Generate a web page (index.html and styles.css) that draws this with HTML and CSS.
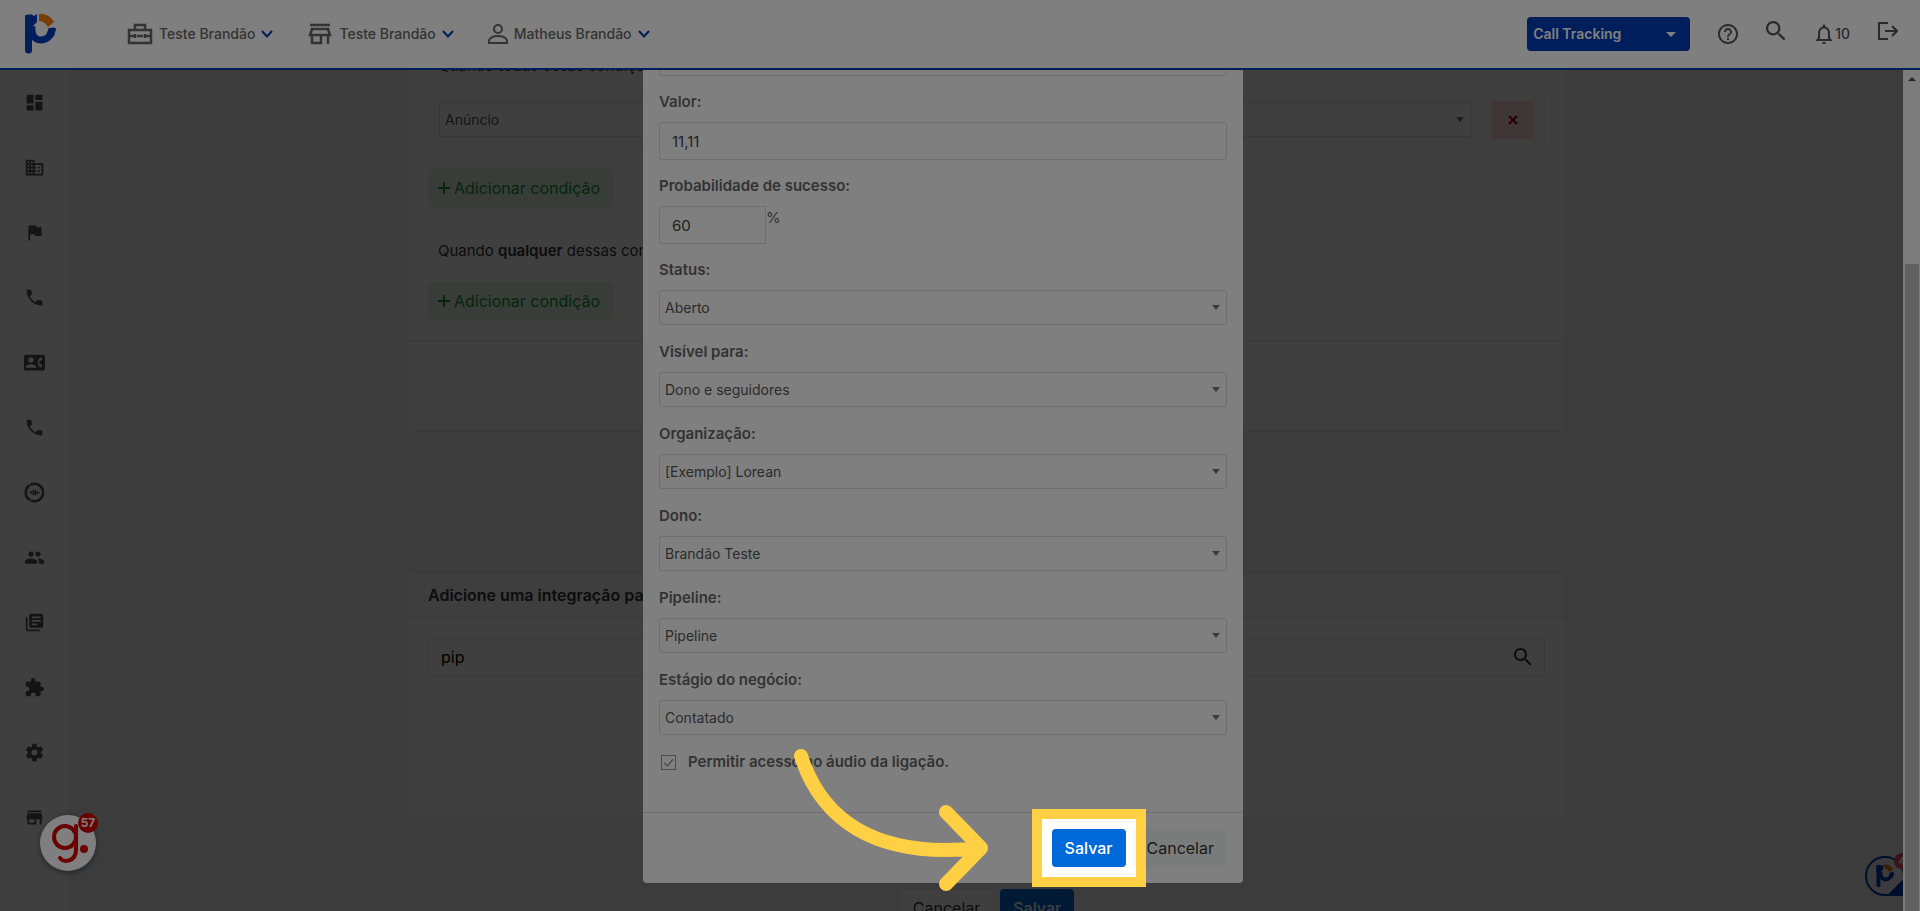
FILE: index.html
```html
<!DOCTYPE html>
<html lang="pt-BR">
<head>
  <meta charset="UTF-8" />
  <meta name="viewport" content="width=device-width, initial-scale=1.0"/>
  <title>Call Tracking</title>
  <link rel="stylesheet" href="styles.css">
</head>
<body>
  <svg class="defs" aria-hidden="true">
    <symbol id="brand" viewBox="0 0 32 42">
      <path d="M4.500 5v32" fill="none" stroke="#003ab8" stroke-width="7" stroke-linecap="round"/>
      <path d="M1 2l3 1.500L7 1l3 2 3-2v8L8 14H1z" fill="#003ab8"/>
      <path d="M8 13c-1 6 1 14 9 14 6 0 11-5 11-12" fill="none" stroke="#003ab8" stroke-width="7"/>
      <path d="M29 14l-6 5v8l7-4 2-7z" fill="#003ab8"/>
      <path d="M15 1c7-1 12 3 15 8l-6 5c-2-3-5-6-9-6z" fill="#ef7d0f"/>
    </symbol>
    <symbol id="phone" viewBox="0 0 24 24"><path d="M6.620 10.790c1.440 2.830 3.760 5.140 6.590 6.590l2.200-2.200c.27-.27.67-.36 1.020-.24 1.120.37 2.330.57 3.570.57.55 0 1 .45 1 1V20c0 .55-.45 1-1 1-9.390 0-17-7.610-17-17 0-.55.45-1 1-1h3.500c.55 0 1 .45 1 1 0 1.250.2 2.450.57 3.570.11.35.03.74-.25 1.020l-2.200 2.200z"/></symbol>
    <symbol id="store" viewBox="0 0 24 24"><path d="M20 4H4v2h16V4zm1 10v-2l-1-5H4l-1 5v2h1v6h10v-6h4v6h2v-6h1zm-9 4H6v-4h6v4z"/></symbol>
    <symbol id="search" viewBox="3 3 18 18"><path d="M15.500 14h-.79l-.28-.27C15.410 12.590 16 11.110 16 9.500 16 5.910 13.090 3 9.500 3S3 5.910 3 9.500 5.910 16 9.500 16c1.610 0 3.090-.59 4.230-1.570l.27.28v.79l5 4.990L20.490 19l-4.990-5zm-6 0C7.010 14 5 11.990 5 9.500S7.010 5 9.500 5 14 7.010 14 9.500 11.990 14 9.500 14z"/></symbol>
    <symbol id="chevron" viewBox="0 0 12 8"><path d="M1 1l5 5.500L11 1" fill="none" stroke="#003ab8" stroke-width="2"/></symbol>
    <symbol id="plus" viewBox="0 0 12 12"><path d="M6 0v12M0 6h12" fill="none" stroke="currentColor" stroke-width="2"/></symbol>
  </svg>

  <header class="topbar">
    <a class="logo" href="#" aria-label="Início"><svg><use href="#brand"/></svg></a>

    <nav class="accounts">
      <button class="account">
        <svg class="account-icon" viewBox="0 0 26 22" fill="none" stroke="currentColor" stroke-width="2.500">
          <path d="M2 7h22v13H2zM8 6V2h10v4M2 13h5m3 0h6m3 0h5M8 11v4m10-4v4"/>
        </svg>
        Teste Brandão
        <svg class="chevron"><use href="#chevron"/></svg>
      </button>
      <button class="account">
        <svg class="account-icon" viewBox="0 0 24 22" fill="none" stroke="currentColor" stroke-width="2.500">
          <path d="M2 2h20M4 6h16l2 6H2zM4 12v8h9v-8M20 12v9"/>
        </svg>
        Teste Brandão
        <svg class="chevron"><use href="#chevron"/></svg>
      </button>
      <button class="account">
        <svg class="account-icon user" viewBox="0 0 20 22" fill="none" stroke="currentColor" stroke-width="2">
          <circle cx="10" cy="6" r="4"/><path d="M1 20v-2c0-3 4-5 9-5s9 2 9 5v2z"/>
        </svg>
        Matheus Brandão
        <svg class="chevron"><use href="#chevron"/></svg>
      </button>
    </nav>

    <div class="tools">
      <div class="product">
        <select aria-label="Produto"><option>Call Tracking</option></select>
      </div>
      <a href="#" class="tool" aria-label="Ajuda">
        <svg viewBox="2 2 20 20"><path d="M11 18h2v-2h-2v2zm1-16C6.480 2 2 6.480 2 12s4.480 10 10 10 10-4.480 10-10S17.520 2 12 2zm0 18c-4.410 0-8-3.590-8-8s3.590-8 8-8 8 3.590 8 8-3.590 8-8 8zm0-14c-2.210 0-4 1.790-4 4h2c0-1.100.9-2 2-2s2 .9 2 2c0 2-3 1.750-3 5h2c0-2.250 3-2.500 3-5 0-2.210-1.790-4-4-4z"/></svg>
      </a>
      <a href="#" class="tool raised" aria-label="Buscar"><svg><use href="#search"/></svg></a>
      <a href="#" class="tool alerts" aria-label="Notificações">
        <svg viewBox="2 2 20 20"><path d="M12 22c1.100 0 2-.9 2-2h-4c0 1.100.89 2 2 2zm6-6v-5c0-3.070-1.640-5.640-4.500-6.320V4c0-.83-.67-1.500-1.500-1.500s-1.500.67-1.500 1.500v.68C7.630 5.360 6 7.920 6 11v5l-2 2v1h16v-1l-2-2zm-2 1H8v-6c0-2.480 1.510-4.500 4-4.500s4 2.020 4 4.500v6z"/></svg>
        <span>10</span>
      </a>
      <a href="#" class="tool raised" aria-label="Sair">
        <svg viewBox="0 0 20 20" fill="none" stroke="currentColor" stroke-width="2"><path class="line" d="M10 2H1v16h9M7 10h11M14 5l5 5-5 5"/></svg>
      </a>
    </div>
  </header>

  <div class="workspace">
    <nav class="sidebar">
      <a href="#" aria-label="Painel"><svg viewBox="0 0 24 24"><path d="M3 13h8V3H3v10zm0 8h8v-6H3v6zm10 0h8V11h-8v10zm0-18v6h8V3h-8z"/></svg></a>
      <a href="#" aria-label="Empresas"><svg viewBox="0 0 24 24"><path d="M12 7V3H2v18h20V7H12zM6 19H4v-2h2v2zm0-4H4v-2h2v2zm0-4H4V9h2v2zm0-4H4V5h2v2zm4 12H8v-2h2v2zm0-4H8v-2h2v2zm0-4H8V9h2v2zm0-4H8V5h2v2zm10 12h-8v-2h2v-2h-2v-2h2v-2h-2V9h8v10zm-2-8h-2v2h2v-2zm0 4h-2v2h2v-2z"/></svg></a>
      <a href="#" aria-label="Campanhas"><svg viewBox="0 0 24 24"><path d="M14.400 6L14 4H5v17h2v-7h5.600l.4 2h7V6z"/></svg></a>
      <a href="#" aria-label="Ligações"><svg><use href="#phone"/></svg></a>
      <a href="#" aria-label="Contatos"><svg viewBox="0 0 24 24"><path d="M22 3H2C.9 3 0 3.900 0 5v14c0 1.100.9 2 2 2h20c1.100 0 1.990-.9 1.990-2L24 5c0-1.100-.9-2-2-2zM8 6c1.660 0 3 1.340 3 3s-1.340 3-3 3-3-1.340-3-3 1.340-3 3-3zm6 12H2v-1c0-2 4-3.100 6-3.100s6 1.100 6 3.100v1zm3.850-4h1.640L21 16l-1.990 1.990c-1.310-.98-2.280-2.380-2.730-3.990-.18-.64-.28-1.310-.28-2s.1-1.360.28-2c.45-1.620 1.420-3.010 2.730-3.990L21 8l-1.510 2h-1.640c-.22.63-.35 1.300-.35 2s.13 1.370.35 2z"/></svg></a>
      <a href="#" aria-label="Números"><svg><use href="#phone"/></svg></a>
      <a href="#" aria-label="Gravações">
        <svg viewBox="0 0 24 24" fill="none" stroke="currentColor"><circle class="line" cx="12" cy="12" r="10" stroke-width="3" stroke-dasharray="20 1"/><path class="line" d="M7 11v2M9 10v4m2-5v6m2-6v6m2-5v4m2-3v2" stroke-width="1.500"/></svg>
      </a>
      <a href="#" aria-label="Usuários"><svg viewBox="0 0 24 24"><path d="M16 11c1.660 0 2.990-1.340 2.990-3S17.660 5 16 5c-1.660 0-3 1.340-3 3s1.340 3 3 3zm-8 0c1.660 0 2.990-1.340 2.990-3S9.660 5 8 5C6.340 5 5 6.340 5 8s1.340 3 3 3zm0 2c-2.330 0-7 1.170-7 3.500V19h14v-2.500c0-2.330-4.670-3.500-7-3.500zm8 0c-.29 0-.62.02-.97.05 1.160.84 1.970 1.970 1.970 3.450V19h6v-2.500c0-2.330-4.670-3.500-7-3.500z"/></svg></a>
      <a href="#" aria-label="Biblioteca"><svg viewBox="0 0 24 24"><path d="M4 6H2v14c0 1.100.9 2 2 2h14v-2H4V6zm16-4H8c-1.100 0-2 .9-2 2v12c0 1.100.9 2 2 2h12c1.100 0 2-.9 2-2V4c0-1.100-.9-2-2-2zm-1 9H9V9h10v2zm-4 4H9v-2h6v2zm4-8H9V5h10v2z"/></svg></a>
      <a href="#" aria-label="Integrações"><svg viewBox="0 0 24 24"><path d="M20.500 11H19V7c0-1.100-.9-2-2-2h-4V3.500C13 2.120 11.880 1 10.500 1S8 2.120 8 3.500V5H4c-1.100 0-1.990.9-1.990 2v3.800H3.500c1.490 0 2.700 1.210 2.700 2.700s-1.210 2.700-2.700 2.700H2V20c0 1.100.9 2 2 2h3.800v-1.500c0-1.490 1.210-2.700 2.700-2.700 1.490 0 2.700 1.210 2.700 2.700V22H17c1.100 0 2-.9 2-2v-4h1.500c1.380 0 2.500-1.120 2.500-2.500S21.880 11 20.500 11z"/></svg></a>
      <a href="#" aria-label="Configurações"><svg viewBox="0 0 24 24"><path d="M19.430 12.980c.04-.32.07-.64.07-.98s-.03-.66-.07-.98l2.110-1.650c.19-.15.24-.42.12-.64l-2-3.460c-.12-.22-.39-.3-.61-.22l-2.490 1c-.52-.4-1.080-.73-1.690-.98l-.38-2.650C14.460 2.180 14.250 2 14 2h-4c-.25 0-.46.18-.49.42l-.38 2.650c-.61.25-1.170.59-1.690.98l-2.490-1c-.23-.09-.49 0-.61.22l-2 3.460c-.13.22-.07.49.12.64l2.110 1.650c-.04.32-.07.65-.07.98s.03.66.07.98l-2.110 1.650c-.19.15-.24.42-.12.64l2 3.460c.12.22.39.3.61.22l2.490-1c.52.4 1.080.73 1.690.98l.38 2.650c.03.24.24.42.49.42h4c.25 0 .46-.18.49-.42l.38-2.650c.61-.25 1.170-.59 1.690-.98l2.490 1c.23.09.49 0 .61-.22l2-3.460c.12-.22.07-.49-.12-.64l-2.110-1.650zM12 15.500c-1.930 0-3.500-1.570-3.500-3.500s1.570-3.500 3.500-3.500 3.500 1.570 3.500 3.500-1.570 3.500-3.500 3.500z"/></svg></a>
      <a href="#" aria-label="Loja"><svg><use href="#store"/></svg></a>
    </nav>

    <main class="content">
      <section class="card rules">
        <div class="card-body">
          <p class="rule-title">Quando <b>todas</b> essas condições forem atendidas:</p>
          <div class="condition">
            <div class="condition-field">
              <div class="select"><select aria-label="Condição"><option>Anúncio</option></select></div>
            </div>
            <div class="condition-remove">
              <button class="btn-remove" aria-label="Remover condição">
                <svg viewBox="0 0 10 10" fill="none" stroke="currentColor" stroke-width="2"><path d="M1 1l8 8M9 1L1 9"/></svg>
              </button>
            </div>
          </div>
          <button class="btn btn-add"><svg><use href="#plus"/></svg>Adicionar condição</button>
          <hr>
          <p class="rule-title">Quando <b>qualquer</b> dessas condições forem atendidas:</p>
          <button class="btn btn-add"><svg><use href="#plus"/></svg>Adicionar condição</button>
        </div>
        <div class="card-footer"></div>
      </section>

      <section class="card integrations">
        <h2 class="card-header">Adicione uma integração para a automação</h2>
        <div class="card-body">
          <div class="search-box">
            <input type="text" value="pip" aria-label="Buscar integração">
            <svg><use href="#search"/></svg>
          </div>
        </div>
      </section>

      <div class="page-actions">
        <button class="btn btn-outline">Cancelar</button>
        <button class="btn btn-primary">Salvar</button>
      </div>

      <button class="chat" aria-label="Chat">
        <svg><use href="#brand"/></svg>
        <span class="chat-count">4</span>
      </button>
    </main>

    <div class="scrollbar" aria-hidden="true"><div class="scrollbar-thumb"></div></div>

    <div class="backdrop"></div>

    <div class="modal-area">
      <form class="modal" onsubmit="return false">
        <div class="modal-body">
          <div class="field field-text">
            <input class="text" type="text" aria-label="Título">
          </div>
          <div class="field field-text">
            <label for="valor">Valor:</label>
            <input class="text" id="valor" type="text" value="11,11">
          </div>
          <div class="field field-text">
            <label for="prob">Probabilidade de sucesso:</label>
            <div class="percent"><input class="text" id="prob" type="text" value="60"><span>%</span></div>
          </div>
          <div class="field">
            <label for="status">Status:</label>
            <div class="select"><select id="status"><option>Aberto</option></select></div>
          </div>
          <div class="field">
            <label for="visivel">Visível para:</label>
            <div class="select"><select id="visivel"><option>Dono e seguidores</option></select></div>
          </div>
          <div class="field">
            <label for="org">Organização:</label>
            <div class="select"><select id="org"><option>[Exemplo] Lorean</option></select></div>
          </div>
          <div class="field">
            <label for="dono">Dono:</label>
            <div class="select"><select id="dono"><option>Brandão Teste</option></select></div>
          </div>
          <div class="field">
            <label for="pipeline">Pipeline:</label>
            <div class="select"><select id="pipeline"><option>Pipeline</option></select></div>
          </div>
          <div class="field">
            <label for="estagio">Estágio do negócio:</label>
            <div class="select"><select id="estagio"><option>Contatado</option></select></div>
          </div>
          <div class="check">
            <input type="checkbox" id="audio" checked>
            <label for="audio">Permitir acesso ao áudio da ligação.</label>
          </div>
        </div>
        <div class="modal-footer">
          <div class="tour-target">
            <button class="btn btn-primary">Salvar</button>
            <div class="spotlight"></div>
            <svg class="tour-arrow" viewBox="0 0 210 152" fill="none" stroke="#ffd043" stroke-width="14" stroke-linecap="round" stroke-linejoin="round">
              <path d="M13 14C32 73 82 118 193 106M158 70l35 36-35 36"/>
            </svg>
          </div>
          <button class="btn btn-light">Cancelar</button>
        </div>
      </form>
    </div>

    <button class="recorder" aria-label="Gravador">
      <svg viewBox="0 0 56 56" fill="none" stroke="#d60000" stroke-width="4" stroke-linecap="round">
        <circle cx="25" cy="22" r="11"/><path d="M36 11v24c0 12-13 13-16 8"/><circle cx="44" cy="34" r="2"/>
      </svg>
      <span class="recorder-count">57</span>
    </button>
  </div>
</body>
</html>
```

FILE: styles.css
```css
* {
  box-sizing: border-box;
}

body {
  margin: 0;
  height: 100vh;
  overflow: hidden;
  display: flex;
  flex-direction: column;
  font-family: Inter, "Noto Sans", sans-serif;
  font-size: 15px;
  line-height: 24px;
  color: #333;
  background: #f1f2f6;
}

button, input, select {
  font: inherit;
  color: inherit;
  margin: 0;
}

button {
  cursor: pointer;
}

svg {
  fill: currentColor;
  flex: none;
}

svg[fill="none"], .line {
  fill: none;
}

.defs {
  position: absolute;
  width: 0;
  height: 0;
}

/* top bar */
.topbar {
  position: relative;
  z-index: 20;
  flex: none;
  height: 70px;
  display: flex;
  align-items: center;
  padding: 0 22px 0 24px;
  background: #fff;
  border-bottom: 2px solid #003ab8;
  color: #666;
}

.logo svg {
  display: block;
  width: 32px;
  height: 42px;
}

.accounts {
  display: flex;
  gap: 34px;
  margin-left: 71px;
}

.account {
  display: flex;
  align-items: center;
  gap: 6px;
  padding: 0;
  border: none;
  background: none;
  font-size: 14px;
  font-weight: 500;
}

.account-icon {
  width: 26px;
  height: 22px;
}

.account-icon.user {
  width: 20px;
}

.chevron {
  width: 12px;
  height: 8px;
}

.tools {
  display: flex;
  align-items: center;
  gap: 28px;
  margin-left: auto;
}

.product {
  position: relative;
  width: 163px;
}

.product select {
  appearance: none;
  display: block;
  width: 100%;
  height: 34px;
  padding: 0 6px;
  border: none;
  border-radius: 4px;
  background: #003ab8;
  color: #fff;
  font-size: 14px;
  font-weight: 600;
}

.product::after {
  content: "";
  position: absolute;
  right: 14px;
  top: 15px;
  border: 5px solid transparent;
  border-top-color: #fff;
  border-bottom: none;
}

.tool {
  display: flex;
  align-items: center;
  gap: 1px;
  color: #555;
  text-decoration: none;
  font-size: 14px;
  font-weight: 500;
}

.tool svg {
  width: 20px;
  height: 20px;
}

.raised {
  padding-bottom: 6px;
}

/* page */
.workspace {
  position: relative;
  flex: 1;
  min-height: 0;
  display: flex;
}

.sidebar {
  flex: none;
  width: 70px;
  background: #fff;
  border-right: 1px solid #e4e4e8;
  overflow: hidden;
}

.sidebar a {
  display: flex;
  align-items: center;
  justify-content: center;
  height: 65px;
  color: #505050;
}

.sidebar svg {
  width: 21px;
  height: 21px;
}

.content {
  position: relative;
  flex: 1;
  min-width: 0;
  overflow: hidden;
}

.card {
  width: 1159px;
  max-width: 100%;
  margin: 0 auto;
  background: #fff;
  border: 1px solid #e6e6e6;
  border-radius: 4px;
}

.card-body {
  padding: 20px;
}

.rules {
  margin-top: -41px;
  margin-bottom: 140px;
}

.rule-title {
  margin: 0;
  padding: 4px 10px;
}

.rule-title b {
  font-weight: 600;
}

.condition {
  display: flex;
  margin: 8px 0 19px;
  background: #f8f8f8;
  border: 1px solid #efefef;
}

.condition-field {
  flex: 1;
  padding: 11px 10px;
}

.condition-remove {
  padding: 10px;
  border-left: 1px solid #efefef;
}

.btn-remove {
  display: block;
  width: 42px;
  height: 38px;
  padding: 0;
  border: none;
  border-radius: 4px;
  background: #fbd9dc;
  color: #a00014;
}

.btn-remove svg {
  width: 10px;
  height: 10px;
}

.btn {
  height: 38px;
  padding: 0 13px;
  border: none;
  border-radius: 4px;
  font-size: 16px;
}

.btn-add {
  display: flex;
  align-items: center;
  gap: 4px;
  padding: 0 13px 0 10px;
  background: #e4f4e8;
  color: #0c9a30;
}

.btn-add svg {
  width: 12px;
  height: 12px;
}

hr {
  margin: 12px 0 15px;
  border: none;
  border-top: 1px solid #ececec;
}

hr + .rule-title {
  margin-bottom: 15px;
}

.card-footer {
  height: 91px;
  background: #f9f9f9;
  border-top: 1px solid #ddd;
}

.card-header {
  margin: 0;
  padding: 10px 20px;
  background: #f9f9f9;
  border-bottom: 1px solid #ddd;
  font-size: 16px;
  font-weight: 600;
}

.integrations {
  min-height: 246px;
}

.search-box {
  display: flex;
  align-items: center;
  height: 38px;
  padding: 0 12px;
  border: 1px solid #e2e2e2;
  border-radius: 2px;
}

.search-box input {
  flex: 1;
  padding: 0;
  border: none;
  outline: none;
  background: none;
  color: #000;
  font-size: 16px;
}

.search-box svg {
  width: 18px;
  height: 18px;
}

.page-actions {
  display: flex;
  justify-content: center;
  gap: 6px;
  margin-top: 71px;
}

.btn-outline {
  background: #fff;
  border: 1px solid #e6e6e6;
}

.btn-primary {
  background: #0069d9;
  color: #fff;
  font-weight: 500;
}

.btn-light {
  background: #f5f9f8;
}

.chat {
  position: absolute;
  right: -2px;
  bottom: 15px;
  width: 40px;
  height: 40px;
  padding: 8px;
  border: 2px solid #003ab8;
  border-radius: 50% 50% 0 50%;
  background: linear-gradient(135deg, #f1f2f6 80%, #003ab8 80%);
}

.chat svg {
  display: block;
  width: 20px;
  height: 24px;
  margin-top: -2px;
}

.chat-count {
  position: absolute;
  right: -7px;
  top: -5px;
  width: 16px;
  border-radius: 8px;
  background: #e05060;
  color: #fff;
  font-size: 10px;
  font-weight: 700;
  line-height: 16px;
}

.scrollbar {
  position: relative;
  flex: none;
  width: 17px;
  padding: 194px 1px 0 2px;
  background: #f8f8f8;
}

.scrollbar::before {
  content: "";
  position: absolute;
  left: 5px;
  top: 7px;
  border: 4px solid transparent;
  border-bottom-color: #505050;
  border-top: none;
}

.scrollbar-thumb {
  height: 100%;
  background: #c1c1c1;
}

.backdrop {
  position: absolute;
  inset: 0 17px 0 0;
  background: rgba(0, 0, 0, 0.5);
}

/* modal, scrolled to its end under the top bar */
.modal-area {
  position: absolute;
  inset: 0 34px 0 0;
  padding-bottom: 28px;
  display: flex;
  flex-direction: column;
  justify-content: flex-end;
  align-items: center;
}

.modal {
  width: 600px;
  max-width: 100%;
  background: #fff;
  border-radius: 4px;
}

.modal-body {
  padding: 16px 16px 38px;
}

.field {
  margin-bottom: 15px;
}

.field-text {
  margin-bottom: 14px;
}

.field label {
  display: block;
  margin-bottom: 8px;
}

label {
  color: #666;
  font-weight: 600;
}

.text {
  display: block;
  width: 100%;
  height: 38px;
  padding: 0 12px;
  border: 1px solid #dcdcdc;
  border-radius: 3px;
  background: #fff;
  color: #444;
}

.percent {
  display: flex;
  color: #666;
}

.percent .text {
  width: 107px;
  border-radius: 3px 0 0 3px;
}

.select {
  position: relative;
}

.select select {
  appearance: none;
  display: block;
  width: 100%;
  height: 35px;
  padding: 0 5px;
  border: 1px solid #dcdcdc;
  border-radius: 3px;
  background: #fff;
  color: #555;
  font-size: 14px;
}

.select::after {
  content: "";
  position: absolute;
  right: 7px;
  top: 15px;
  border: 4px solid transparent;
  border-top: 5px solid #777;
  border-bottom: none;
}

.check {
  display: flex;
  align-items: center;
  gap: 12px;
  padding-left: 2px;
}

.check input {
  appearance: none;
  width: 15px;
  height: 15px;
  border: 1px solid #999;
  display: grid;
  place-items: center;
}

.check input::before {
  content: "";
  width: 4px;
  height: 8px;
  margin-bottom: 2px;
  border: solid #777;
  border-width: 0 1px 1px 0;
  transform: rotate(40deg);
}

.modal-footer {
  display: flex;
  justify-content: flex-end;
  gap: 8px;
  padding: 16px;
  border-top: 1px solid #dcdcdc;
}

/* tour: dims everything except the target button */
.tour-target {
  position: relative;
}

.spotlight {
  position: absolute;
  z-index: 50;
  inset: -20px;
  border: 10px solid #ffd043;
  box-shadow: 0 0 0 4000px rgba(0, 0, 0, 0.5);
  pointer-events: none;
}

.tour-arrow {
  position: absolute;
  z-index: 51;
  right: 128px;
  top: -87px;
  width: 210px;
  height: 152px;
  pointer-events: none;
}

.recorder {
  position: absolute;
  left: 40px;
  bottom: 40px;
  width: 56px;
  height: 56px;
  padding: 0;
  border: none;
  border-radius: 50%;
  background: #fff;
  box-shadow: 0 2px 6px rgba(0, 0, 0, 0.4);
}

.recorder-count {
  position: absolute;
  right: -2px;
  top: -2px;
  width: 20px;
  border-radius: 10px;
  background: #d60000;
  color: #fff;
  font-size: 12px;
  font-weight: 700;
  line-height: 20px;
}
```
